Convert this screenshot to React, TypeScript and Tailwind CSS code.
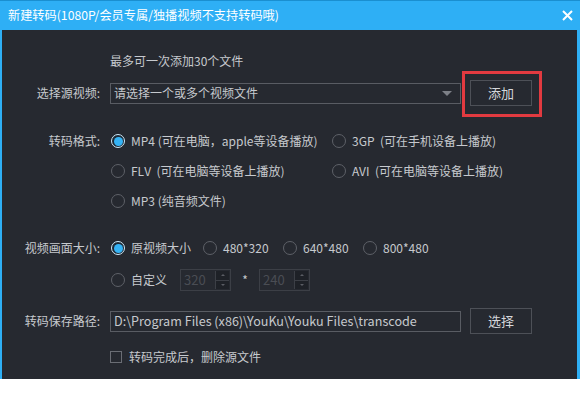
import React from 'react';

const font = { fontFamily: '"Microsoft YaHei", "Noto Sans CJK SC", "Noto Sans", sans-serif' };

function Radio({ checked = false }: { checked?: boolean }) {
  return (
    <span
      className={`w-[14px] h-[14px] rounded-full border flex items-center justify-center shrink-0 ${
        checked ? 'border-[#cfe9f8] bg-[#1d2a36]' : 'border-[#5e6168]'
      }`}
    >
      {checked && <span className="w-[9px] h-[9px] rounded-full bg-[#35b3f5]" />}
    </span>
  );
}

function Option({ checked, label, className = '' }: { checked?: boolean; label: string; className?: string }) {
  return (
    <div className={`flex items-center gap-[6px] ${className}`}>
      <Radio checked={checked} />
      <span className="whitespace-pre">{label}</span>
    </div>
  );
}

function Spin({ value }: { value: string }) {
  return (
    <div className="w-[51px] h-[22px] border border-[#3c3f46] flex items-center justify-between pl-[3px] pr-[1px]">
      <span className="text-[#4a4d54] text-[13px]">{value}</span>
      <div className="flex flex-col w-[14px] h-[18px] border-l border-[#3c3f46]">
        <div className="flex-1 flex items-center justify-center border-b border-[#3c3f46] bg-[#1e2127]">
          <span className="w-0 h-0 border-x-[2px] border-x-transparent border-b-[2px] border-b-[#5a5d64]" />
        </div>
        <div className="flex-1 flex items-center justify-center bg-[#1e2127]">
          <span className="w-0 h-0 border-x-[2px] border-x-transparent border-t-[2px] border-t-[#5a5d64]" />
        </div>
      </div>
    </div>
  );
}

export default function App() {
  return (
    <div className="w-[580px] h-[394px] bg-white text-[12px]" style={font}>
      <div className="w-[580px] h-[379px] flex flex-col bg-[#2eaff5] border-t border-[#1a8fd0]">
        {/* title bar */}
        <div className="h-[29px] flex items-center justify-between pl-[8px] pr-[7px] text-white">
          <span className="text-[12.2px]">新建转码(1080P/会员专属/独播视频不支持转码哦)</span>
          <svg width="11" height="11" viewBox="0 0 11 11">
            <path d="M1 1 L10 10 M10 1 L1 10" stroke="white" strokeWidth="2" />
          </svg>
        </div>

        {/* body */}
        <div className="flex-1 mx-[2px] mr-[3px] bg-[#262930] text-[#c6c9ce] flex flex-col pt-[21px]">
          <div className="h-[20px] flex items-center pl-[108px]">最多可一次添加30个文件</div>

          <div className="h-[26px] mt-[9px] flex items-center">
            <span className="w-[98px] text-right">选择源视频:</span>
            <div className="ml-[10px] w-[351px] h-[21px] border border-[#595c63] flex items-center justify-between pl-[3px] pr-[8px]">
              <span>请选择一个或多个视频文件</span>
              <span className="w-0 h-0 border-x-[5px] border-x-transparent border-t-[5px] border-t-[#7d8087]" />
            </div>
            <div className="relative ml-[9px]">
              <div className="w-[62px] h-[26px] border border-[#4d5057] flex items-center justify-center text-[13px] text-[#d4d6da]">
                添加
              </div>
              <div className="absolute left-[-8px] top-[-9px] w-[80px] h-[46px] border-[3px] border-[#e23a40]" />
            </div>
          </div>

          <div className="h-[20px] mt-[25px] flex items-center">
            <span className="w-[98px] text-right">转码格式:</span>
            <Option checked label="MP4 (可在电脑，apple等设备播放)" className="ml-[11px] w-[221px]" />
            <Option label="3GP  (可在手机设备上播放)" />
          </div>
          <div className="h-[20px] mt-[10px] flex items-center">
            <Option label="FLV  (可在电脑等设备上播放)" className="ml-[109px] w-[221px]" />
            <Option label="AVI  (可在电脑等设备上播放)" />
          </div>
          <div className="h-[20px] mt-[10px] flex items-center">
            <Option label="MP3 (纯音频文件)" className="ml-[109px]" />
          </div>

          <div className="h-[20px] mt-[27px] flex items-center">
            <span className="w-[98px] text-right">视频画面大小:</span>
            <Option checked label="原视频大小" className="ml-[11px] w-[92px]" />
            <Option label="480*320" className="w-[80px]" />
            <Option label="640*480" className="w-[80px]" />
            <Option label="800*480" />
          </div>
          <div className="h-[22px] mt-[11px] flex items-center">
            <Option label="自定义" className="ml-[109px] w-[69px]" />
            <Spin value="320" />
            <span className="w-[28px] text-center">*</span>
            <Spin value="240" />
          </div>

          <div className="h-[26px] mt-[17px] flex items-center">
            <span className="w-[98px] text-right">转码保存路径:</span>
            <div className="ml-[10px] w-[351px] h-[21px] border border-[#595c63] flex items-center pl-[3px] text-[12.6px]">
              D:\Program Files (x86)\YouKu\Youku Files\transcode
            </div>
            <div className="ml-[9px] w-[62px] h-[26px] border border-[#4d5057] flex items-center justify-center text-[13px] text-[#d4d6da]">
              选择
            </div>
          </div>

          <div className="h-[20px] mt-[13px] flex items-center pl-[108px] gap-[7px]">
            <span className="w-[12px] h-[12px] border border-[#6a6d74]" />
            <span>转码完成后，删除源文件</span>
          </div>
        </div>
      </div>
    </div>
  );
}
